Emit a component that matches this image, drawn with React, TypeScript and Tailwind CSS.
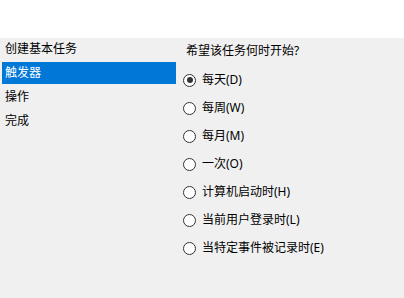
import { useState } from "react";

const steps = ["创建基本任务", "触发器", "操作", "完成"];

const options = [
  "每天(D)",
  "每周(W)",
  "每月(M)",
  "一次(O)",
  "计算机启动时(H)",
  "当前用户登录时(L)",
  "当特定事件被记录时(E)",
];

export default function App() {
  const [picked, setPicked] = useState(0);

  return (
    <div
      className="h-[298px] w-[404px] overflow-hidden bg-[#f0f0f0] text-[12px] text-black"
      style={{ fontFamily: '"Noto Sans", "Noto Sans CJK SC", sans-serif' }}
    >
      <div className="h-[38px] bg-white" />
      <div className="flex">
        {/* step list */}
        <div className="flex w-[183px] flex-col gap-[2px] pl-[2px] pr-[7px]">
          {steps.map((s, i) => (
            <div
              key={s}
              className={
                "flex h-[22px] items-center pl-[3px] " +
                (i === 1 ? "bg-[#0078d7] text-white" : "")
              }
            >
              {s}
            </div>
          ))}
        </div>

        {/* trigger choices */}
        <div className="flex flex-col pt-[2px]">
          <div className="ml-[3px] flex h-[22px] items-center">希望该任务何时开始?</div>
          <div className="mt-[4px] flex flex-col">
            {options.map((o, i) => (
              <label
                key={o}
                className="flex h-[28px] cursor-default items-center gap-[6px]"
                onClick={() => setPicked(i)}
              >
                <span className="flex h-[13px] w-[13px] items-center justify-center rounded-full border border-[#333] bg-white">
                  {picked === i && (
                    <span className="h-[6px] w-[6px] rounded-full bg-[#333]" />
                  )}
                </span>
                <span>{o}</span>
              </label>
            ))}
          </div>
        </div>
      </div>
    </div>
  );
}
